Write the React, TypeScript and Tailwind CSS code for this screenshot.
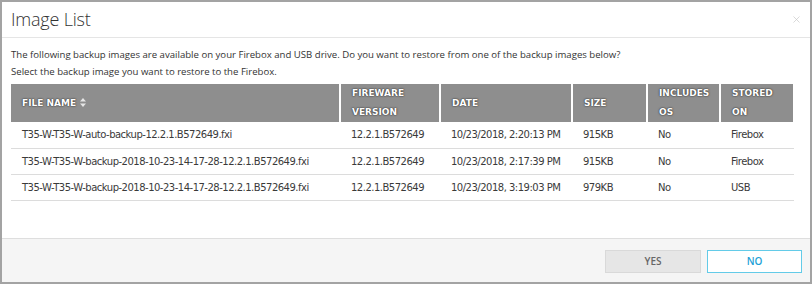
import { X } from "lucide-react";

interface iRow {
  file: string;
  version: string;
  date: string;
  size: string;
  os: string;
  stored: string;
}

const rows: iRow[] = [
  {
    file: "T35-W-T35-W-auto-backup-12.2.1.B572649.fxi",
    version: "12.2.1.B572649",
    date: "10/23/2018, 2:20:13 PM",
    size: "915KB",
    os: "No",
    stored: "Firebox",
  },
  {
    file: "T35-W-T35-W-backup-2018-10-23-14-17-28-12.2.1.B572649.fxi",
    version: "12.2.1.B572649",
    date: "10/23/2018, 2:17:39 PM",
    size: "915KB",
    os: "No",
    stored: "Firebox",
  },
  {
    file: "T35-W-T35-W-backup-2018-10-23-14-17-28-12.2.1.B572649.fxi",
    version: "12.2.1.B572649",
    date: "10/23/2018, 3:19:03 PM",
    size: "979KB",
    os: "No",
    stored: "USB",
  },
];

const SortIcon = () => (
  <svg width="6" height="9" viewBox="0 0 6 9" className="inline-block ml-[4px] align-[-1px]">
    <path d="M3 0 L6 3.5 H0 Z" fill="#e6e6e6" />
    <path d="M3 9 L6 5.5 H0 Z" fill="#e6e6e6" />
  </svg>
);

const th =
  "px-[11px] text-left align-middle font-bold text-[9px] leading-[19px] text-white border-r-2 border-white [text-shadow:0_0_2px_#333,0_0_1px_#333]";
const td = "px-[11px] h-[26px] align-middle whitespace-nowrap";

export default function App() {
  return (
    <div
      className="w-[812px] h-[284px] border-2 border-[#a3a3a3] bg-white flex flex-col text-[#333]"
      style={{ fontFamily: "'Open Sans', sans-serif" }}
    >
      <div className="h-[36px] shrink-0 flex items-center justify-between pl-[9px] pr-[8px] border-b border-[#e5e5e5]">
        <h2 className="text-[18px] font-light tracking-[-0.2px] text-[#333]">Image List</h2>
        <X size={11} className="text-[#c8c8c8]" strokeWidth={1.5} />
      </div>

      <div className="flex-grow px-[9px] pt-[8px]">
        <p className="text-[9.6px] leading-[17px] text-[#333]">
          The following backup images are available on your Firebox and USB drive. Do you want to restore from one of
          the backup images below?
        </p>
        <p className="text-[9.6px] leading-[17px] text-[#333]">Select the backup image you want to restore to the Firebox.</p>

        <table
          className="mt-[4px] w-[783px] table-fixed border-collapse"
          style={{ fontFamily: "'DejaVu Sans', Verdana, sans-serif" }}
        >
          <colgroup>
            <col className="w-[329px]" />
            <col className="w-[100px]" />
            <col className="w-[132px]" />
            <col className="w-[75px]" />
            <col className="w-[73px]" />
            <col className="w-[74px]" />
          </colgroup>
          <thead>
            <tr className="bg-[#8e8e8e] h-[37px]">
              <th className={th}>
                FILE NAME
                <SortIcon />
              </th>
              <th className={th}>
                FIREWARE
                <br />
                VERSION
              </th>
              <th className={th}>DATE</th>
              <th className={th}>SIZE</th>
              <th className={th}>
                INCLUDES
                <br />
                OS
              </th>
              <th className={th + " border-r-0"}>
                STORED
                <br />
                ON
              </th>
            </tr>
          </thead>
          <tbody className="text-[10px] tracking-[-0.5px] text-[#3a3a3a]">
            {rows.map((row, index) => (
              <tr key={index} className="border-b border-[#dcdcdc]">
                <td className={td}>{row.file}</td>
                <td className={td}>{row.version}</td>
                <td className={td}>{row.date}</td>
                <td className={td}>{row.size}</td>
                <td className={td}>{row.os}</td>
                <td className={td}>{row.stored}</td>
              </tr>
            ))}
          </tbody>
        </table>
      </div>

      <div className="h-[44px] shrink-0 bg-[#f5f5f5] border-t border-[#dedede] flex justify-end items-start gap-[6px] pt-[11px] pr-[8px]">
        <button className="w-[96px] h-[23px] bg-[#e6e6e6] border border-[#d9d9d9] text-[10px] font-semibold text-[#666]">
          YES
        </button>
        <button className="w-[95px] h-[23px] bg-white border border-[#63cbe8] text-[10px] font-semibold text-[#1e9fd6]">
          NO
        </button>
      </div>
    </div>
  );
}
